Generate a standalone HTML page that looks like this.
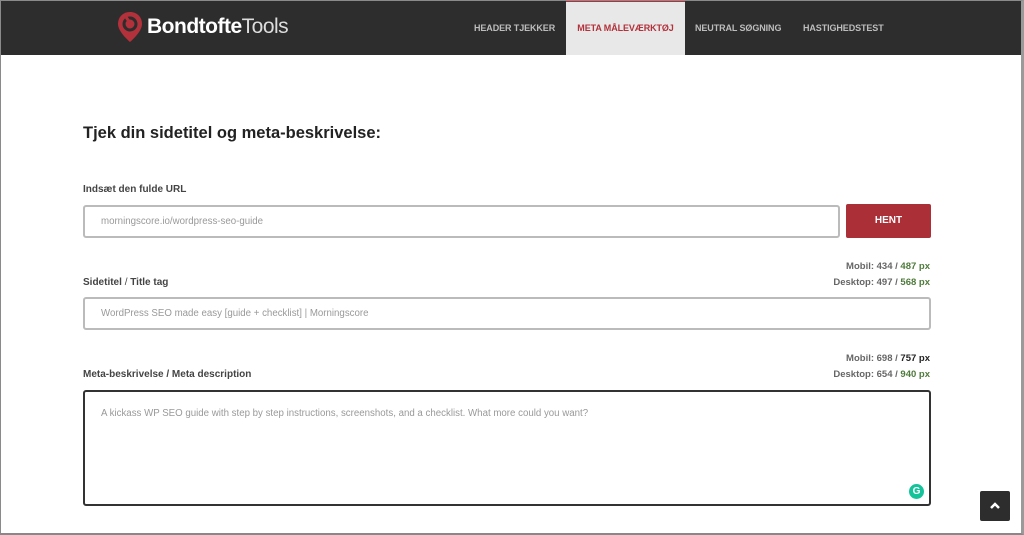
<!DOCTYPE html>
<html><head><meta charset="utf-8"><style>
*{box-sizing:border-box;margin:0;padding:0}
body{width:1024px;height:535px;overflow:hidden;background:#fff;font-family:"Liberation Sans",sans-serif;position:relative;}
.frame{position:absolute;inset:0;border:1px solid #8a8a8a;border-right:3px solid #9a9a9a;border-bottom:2px solid #888;pointer-events:none;z-index:5}
.hdr{position:absolute;left:0;top:0;width:1024px;height:55px;background:#2d2d2d}
.logo{position:absolute;left:117px;top:11px;display:flex;align-items:center}
.logo b{color:#fff;font-size:21px;letter-spacing:-0.5px;margin-left:4px}
.logo span{color:#ddd;font-size:21px;font-weight:normal;letter-spacing:-0.5px}
.nav{position:absolute;top:0;height:55px;line-height:56px;font-size:9px;font-weight:bold;color:#bdbdbd;letter-spacing:-0.1px}
.act{background:#e8e8e8;color:#b3313a;border-top:2px solid #b3313a;line-height:52px;left:566px;width:119px;text-align:center}
h1{position:absolute;left:83px;top:124px;font-size:16.5px;color:#222;font-weight:bold}
.lbl{position:absolute;font-size:10px;font-weight:bold;color:#444}
.inp{position:absolute;border:2px solid #bbb;border-radius:3px;font-size:9.7px;color:#999;padding-left:16px}
.r{position:absolute;right:94px;font-size:9.5px;font-weight:bold;color:#666;text-align:right}
.g{color:#4e7a3a}
</style></head><body>
<div class="hdr">
 <div class="logo"><svg width="26" height="32" viewBox="0 0 26 32"><path d="M13 1C6 1 1 6 1 13c0 8 12 18 12 18s12-10 12-18C25 6 20 1 13 1z" fill="#b3313a"/><circle cx="13" cy="13" r="6" fill="none" stroke="#2d2d2d" stroke-width="3"/><path d="M9 6l4 6" stroke="#b3313a" stroke-width="3"/></svg><b>Bondtofte</b><span>Tools</span></div>
 <div class="nav" style="left:474px">HEADER TJEKKER</div>
 <div class="nav act">META MÅLEVÆRKTØJ</div>
 <div class="nav" style="left:695px">NEUTRAL SØGNING</div>
 <div class="nav" style="left:803px">HASTIGHEDSTEST</div>
</div>
<h1>Tjek din sidetitel og meta-beskrivelse:</h1>
<div class="lbl" style="left:83px;top:184px">Indsæt den fulde URL</div>
<div class="inp" style="left:83px;top:205px;width:757px;height:33px;line-height:29px">morningscore.io/wordpress-seo-guide</div>
<div style="position:absolute;left:846px;top:204px;width:85px;height:34px;background:#ab2f37;color:#fff;font-size:10px;font-weight:bold;text-align:center;line-height:34px;border-radius:2px">HENT</div>
<div class="r" style="top:261px">Mobil: 434 / <span class="g">487 px</span></div>
<div class="r" style="top:277px">Desktop: 497 / <span class="g">568 px</span></div>
<div class="lbl" style="left:83px;top:277px">Sidetitel <span style="font-weight:normal">/</span> Title tag</div>
<div class="inp" style="left:83px;top:297px;width:848px;height:33px;line-height:29px">WordPress SEO made easy [guide + checklist] | Morningscore</div>
<div class="r" style="top:353px">Mobil: 698 / <span style="color:#222">757 px</span></div>
<div class="r" style="top:369px">Desktop: 654 / <span class="g">940 px</span></div>
<div class="lbl" style="left:83px;top:369px">Meta-beskrivelse / Meta description</div>
<div class="inp" style="left:83px;top:390px;width:848px;height:116px;border-color:#333;padding-top:16px;line-height:12px">A kickass WP SEO guide with step by step instructions, screenshots, and a checklist. What more could you want?</div>
<div style="position:absolute;left:909px;top:484px;width:15px;height:15px;border-radius:50%;background:#15c39a;color:#fff;font-size:10px;font-weight:bold;text-align:center;line-height:15px">G</div>
<div style="position:absolute;left:980px;top:491px;width:30px;height:30px;background:#2d2d2d;border-radius:2px"><svg width="30" height="30"><path d="M11 17l4-4 4 4" stroke="#fff" stroke-width="2.5" fill="none"/></svg></div>
<div class="frame"></div>
</body></html>
